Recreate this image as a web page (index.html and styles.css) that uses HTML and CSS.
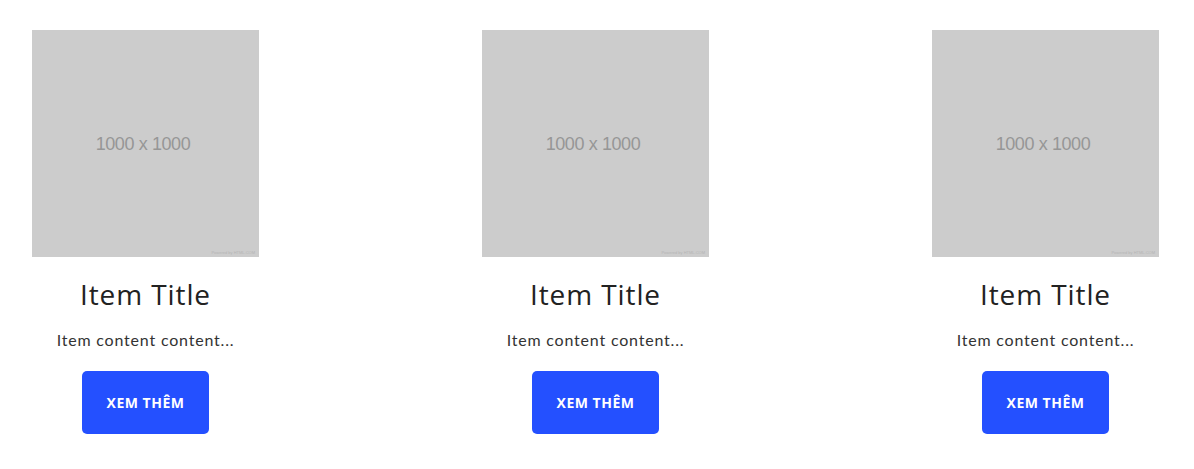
FILE: index.html
```html
<!DOCTYPE html>
<html>
    <link rel="stylesheet" href="styles.css">
    <head>
        <meta charset="utf-8">
        <title>Items</title>
    </head>
    <body>
        <section class="items">
            <div class="item">
                <div class="thumb">
                    <span class="thumb-size">1000 x 1000</span>
                    <span class="thumb-credit">Powered by HTML.COM</span>
                </div>
                <h3 class="item-title">Item Title</h3>
                <p class="item-text">Item content content...</p>
                <a class="item-btn">XEM THÊM</a>
            </div>
            <div class="item">
                <div class="thumb">
                    <span class="thumb-size">1000 x 1000</span>
                    <span class="thumb-credit">Powered by HTML.COM</span>
                </div>
                <h3 class="item-title">Item Title</h3>
                <p class="item-text">Item content content...</p>
                <a class="item-btn">XEM THÊM</a>
            </div>
            <div class="item">
                <div class="thumb">
                    <span class="thumb-size">1000 x 1000</span>
                    <span class="thumb-credit">Powered by HTML.COM</span>
                </div>
                <h3 class="item-title">Item Title</h3>
                <p class="item-text">Item content content...</p>
                <a class="item-btn">XEM THÊM</a>
            </div>
        </section>
    </body>
</html>
```

FILE: styles.css
```css
body {
    margin: 0;
    background: #fff;
    font-family: 'Open Sans', sans-serif;
}

.items {
    display: flex;
    justify-content: space-between;
    padding: 30px 35px 0 32px;
}

.item {
    width: 227px;
    display: flex;
    flex-direction: column;
    align-items: center;
}

.thumb {
    width: 227px;
    height: 227px;
    background-color: #cccccc;
    display: flex;
    align-items: center;
    justify-content: center;
    position: relative;
}

.thumb-size {
    font-family: 'Liberation Sans', Arial, sans-serif;
    font-size: 18px;
    color: #969696;
    letter-spacing: -0.4px;
    margin: 2px 5px 0 0;
}

.thumb-credit {
    position: absolute;
    right: 4px;
    bottom: 2px;
    font-family: 'Liberation Sans', Arial, sans-serif;
    font-size: 4px;
    color: #b4b4b4;
}

.item-title {
    margin: 20px 0 0;
    font-family: 'Open Sans', sans-serif;
    font-weight: 400;
    font-size: 28px;
    line-height: 34px;
    letter-spacing: 0.9px;
    color: #222;
}

.item-text {
    margin: 18px 0 0;
    font-family: 'Lato', sans-serif;
    font-size: 16px;
    line-height: 22px;
    letter-spacing: 0.8px;
    color: #333;
}

.item-btn {
    margin-top: 20px;
    width: 127px;
    height: 63px;
    display: flex;
    align-items: center;
    justify-content: center;
    background-color: #2450ff;
    border-radius: 5px;
    color: #fff;
    font-family: 'Open Sans', sans-serif;
    font-weight: 700;
    font-size: 14px;
    letter-spacing: 0.5px;
}
```
